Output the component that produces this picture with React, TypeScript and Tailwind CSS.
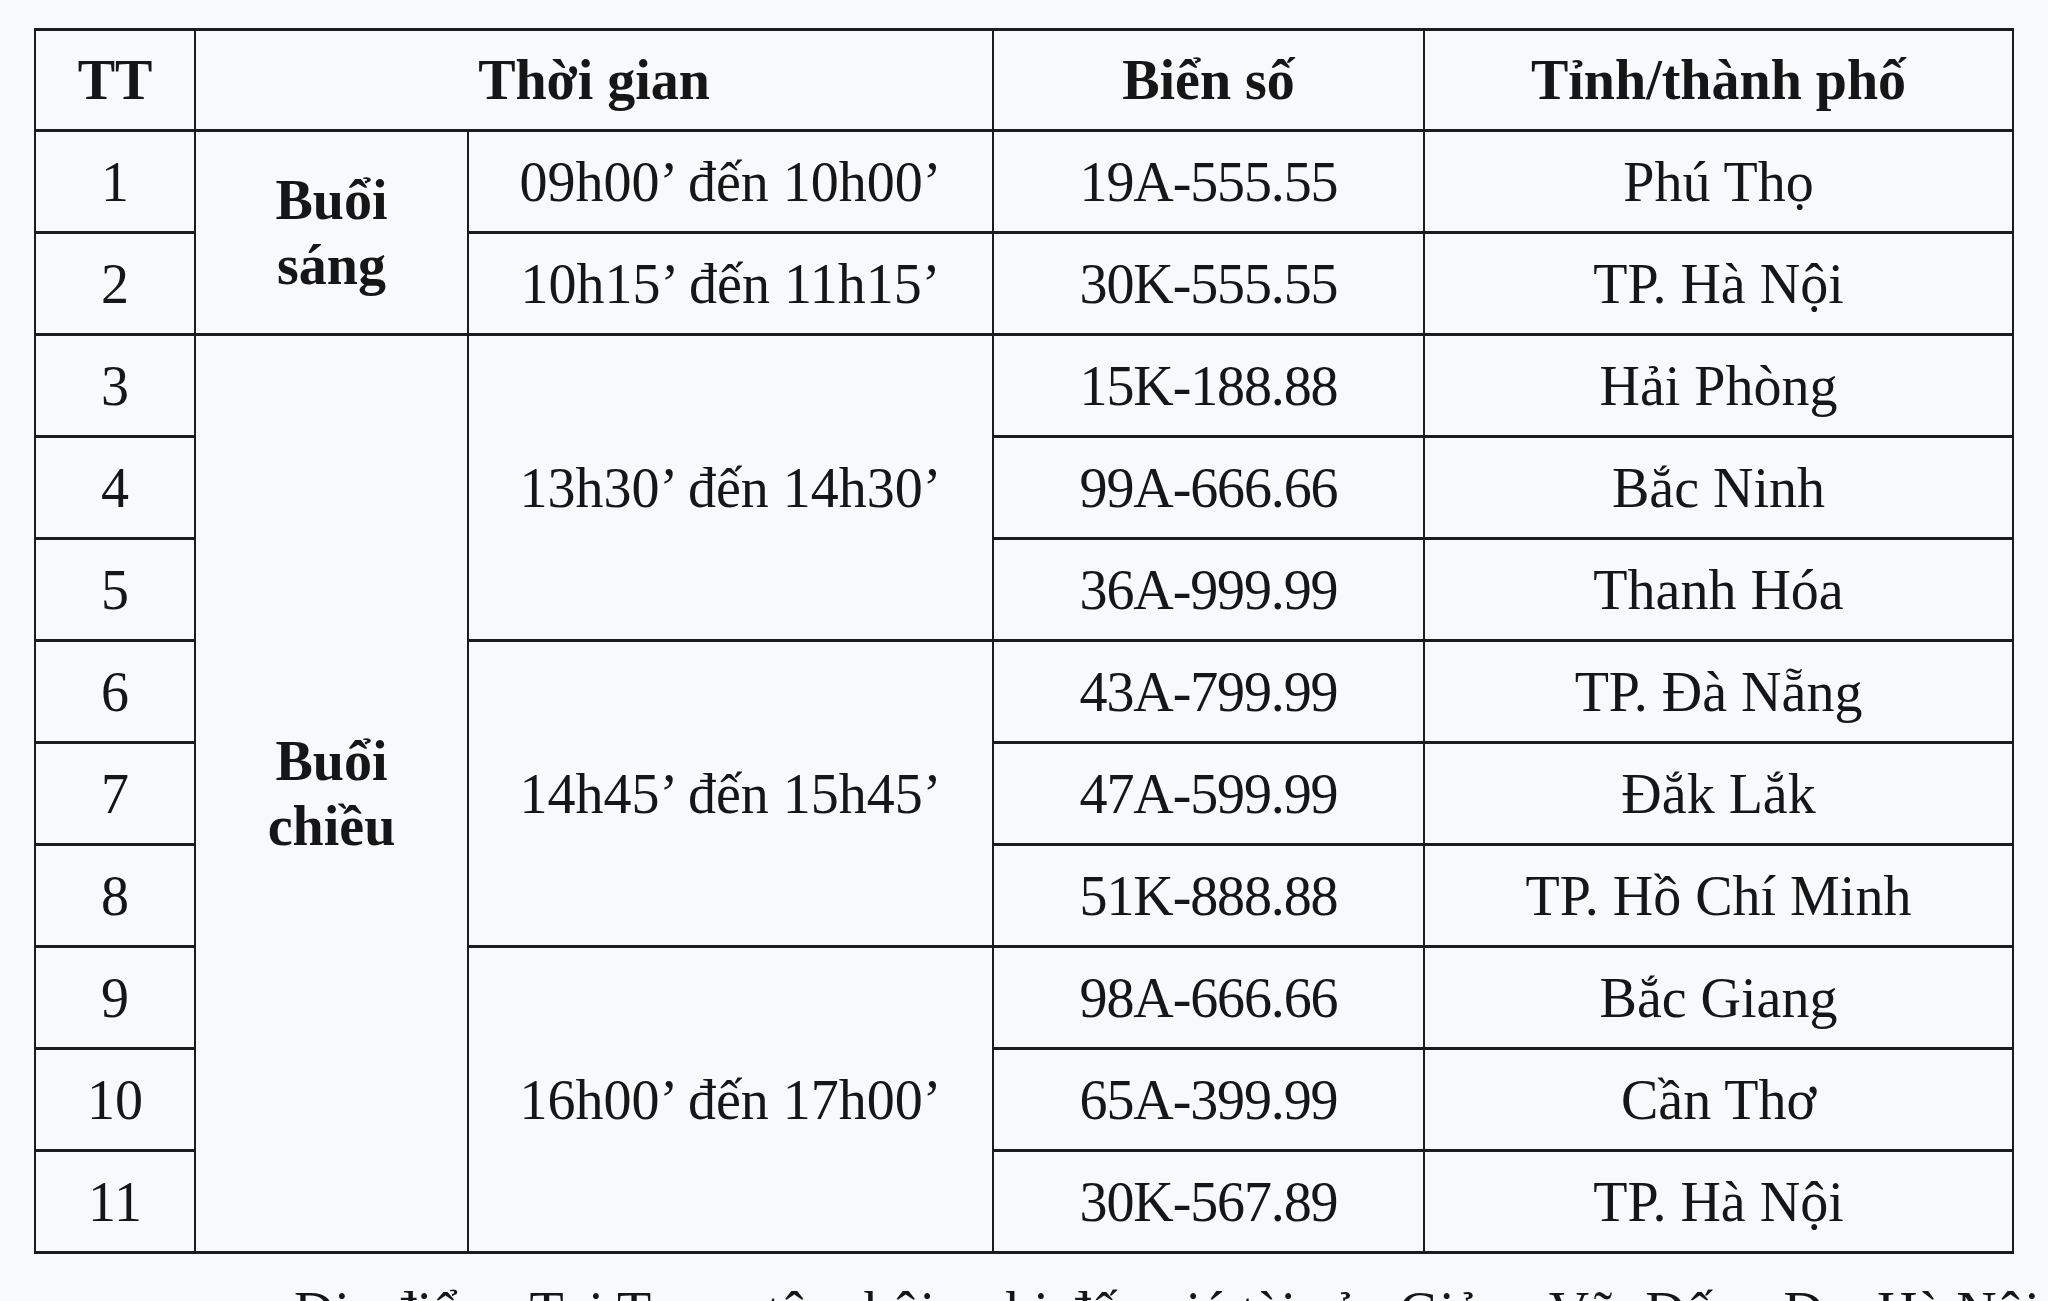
import React from "react";

// Lịch đấu giá biển số – bảng theo buổi
type Row = { plate: string; city: string };

const rows: Row[] = [
  { plate: "19A-555.55", city: "Phú Thọ" },
  { plate: "30K-555.55", city: "TP. Hà Nội" },
  { plate: "15K-188.88", city: "Hải Phòng" },
  { plate: "99A-666.66", city: "Bắc Ninh" },
  { plate: "36A-999.99", city: "Thanh Hóa" },
  { plate: "43A-799.99", city: "TP. Đà Nẵng" },
  { plate: "47A-599.99", city: "Đắk Lắk" },
  { plate: "51K-888.88", city: "TP. Hồ Chí Minh" },
  { plate: "98A-666.66", city: "Bắc Giang" },
  { plate: "65A-399.99", city: "Cần Thơ" },
  { plate: "30K-567.89", city: "TP. Hà Nội" },
];

// which row opens a time slot, and how many rows it spans
const slots: Record<number, { label: string; span: number }> = {
  0: { label: "09h00’ đến 10h00’", span: 1 },
  1: { label: "10h15’ đến 11h15’", span: 1 },
  2: { label: "13h30’ đến 14h30’", span: 3 },
  5: { label: "14h45’ đến 15h45’", span: 3 },
  8: { label: "16h00’ đến 17h00’", span: 3 },
};

const cell = "border-x-2 border-y-[3px] border-[#1c1c1c] text-center align-middle p-0";

export default function App() {
  return (
    <div
      className="w-[2048px] h-[1301px] overflow-hidden bg-[#f8f9fb] text-[#161616] text-[56px] leading-none"
      style={{ fontFamily: '"Liberation Serif", "Times New Roman", serif' }}
    >
      <div className="pl-[34px] pt-[28px]">
        <table className="border-collapse table-fixed w-[1978px]">
          <colgroup>
            <col className="w-[160px]" />
            <col className="w-[273px]" />
            <col className="w-[525px]" />
            <col className="w-[431px]" />
            <col className="w-[589px]" />
          </colgroup>
          <thead>
            <tr className="h-[101px] font-bold">
              <th className={cell}>TT</th>
              <th className={cell} colSpan={2}>Thời gian</th>
              <th className={cell}>Biển số</th>
              <th className={cell}>Tỉnh/thành phố</th>
            </tr>
          </thead>
          <tbody>
            {rows.map((r, i) => (
              <tr key={i} className="h-[102px]">
                <td className={cell}>{i + 1}</td>
                {i === 0 && (
                  <td className={`${cell} font-bold leading-[65px]`} rowSpan={2}>
                    Buổi
                    <br />
                    sáng
                  </td>
                )}
                {i === 2 && (
                  <td className={`${cell} font-bold leading-[65px]`} rowSpan={9}>
                    Buổi
                    <br />
                    chiều
                  </td>
                )}
                {slots[i] && (
                  <td className={cell} rowSpan={slots[i].span}>
                    {slots[i].label}
                  </td>
                )}
                <td className={`${cell} tracking-[-0.02em]`}>{r.plate}</td>
                <td className={cell}>{r.city}</td>
              </tr>
            ))}
          </tbody>
        </table>
      </div>
      <p className="pl-[294px] pt-[30px] whitespace-nowrap">
        Địa điểm: Tại Trung tâm hội nghị đấu giá tài sản Giảng Võ, Đống Đa, Hà Nội
      </p>
    </div>
  );
}
